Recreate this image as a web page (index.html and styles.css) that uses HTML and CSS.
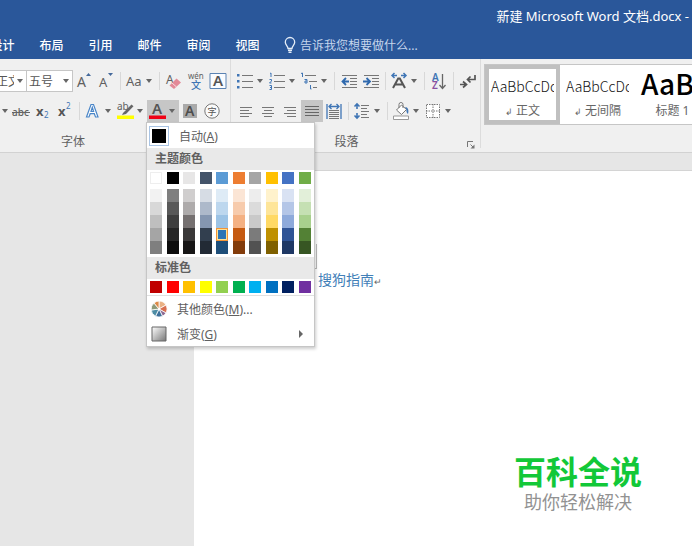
FILE: index.html
```html
<!DOCTYPE html>
<html lang="zh-CN">
<head>
<meta charset="utf-8">
<title>新建 Microsoft Word 文档.docx</title>
<link rel="stylesheet" href="styles.css">
</head>
<body>
<svg class="defs" aria-hidden="true">
  <symbol id="caret" viewBox="0 0 6 4"><path d="M0 0h6L3 4z" fill="#666"/></symbol>
</svg>
<header class="title-area">
  <div class="title">新建 Microsoft Word 文档.docx -</div>
  <nav class="tabs">
    <a href="#">设计</a><a href="#">布局</a><a href="#">引用</a><a href="#">邮件</a><a href="#">审阅</a><a href="#">视图</a>
    <button class="tell-me" type="button">
      <svg width="12" height="16" viewBox="0 0 12 16" fill="none" stroke="#e4edf8" stroke-width="1.3"><path d="M4 11.5C4 9 1.300 8 1.300 5.200a4.700 4.700 0 0 1 9.400 0C10.700 8 8 9 8 11.500z"/><path d="M4 13.300h4M4.500 15.200h3" stroke-width="1.600"/></svg>
      <span>告诉我您想要做什么...</span>
    </button>
  </nav>
</header>

<section class="ribbon">
  <div class="group font-group">
    <div class="row">
      <span class="combo name"><select aria-label="字体"><option>正文</option></select><svg class="caret"><use href="#caret"/></svg></span>
      <span class="combo size"><select aria-label="字号"><option>五号</option></select><svg class="caret"><use href="#caret"/></svg></span>
      <button class="tool" type="button" aria-label="增大字号"><svg width="16" height="20" viewBox="0 0 16 20"><text x="1" y="16" class="g" font-size="14">A</text><path d="M10 5l2.500-3L15 5z" fill="#44699b"/></svg></button>
      <button class="tool" type="button" aria-label="减小字号"><svg width="16" height="20" viewBox="0 0 16 20"><text x="1" y="16" class="g" font-size="13">A</text><path d="M10 2h5l-2.500 3z" fill="#44699b"/></svg></button>
      <i class="sep"></i>
      <button class="split" type="button" aria-label="更改大小写"><svg width="18" height="20" viewBox="0 0 18 20"><text x="0" y="15" class="g" font-size="13">Aa</text></svg><svg class="caret"><use href="#caret"/></svg></button>
      <i class="sep"></i>
      <button class="tool" type="button" aria-label="清除格式"><svg width="16" height="20" viewBox="0 0 16 20"><text x="0" y="13" class="g" font-size="12">A</text><path d="M3.500 14.500l7-7 4.500 4-7 6.500z" fill="#e38a98"/><path d="M6 12l4.500 4" stroke="#f8dce0"/></svg></button>
      <button class="tool" type="button" aria-label="拼音指南"><svg width="16" height="20" viewBox="0 0 16 20"><text x="0" y="8" class="g" font-size="8">wén</text><text x="3" y="18" font-size="10" font-weight="500" fill="#3f75b5">文</text></svg></button>
      <button class="tool" type="button" aria-label="字符边框"><svg width="18" height="20" viewBox="0 0 18 20"><path d="M1 2.500h16v15H1z" fill="#fafcff" stroke="#5b83b3"/><text x="4" y="15" font-size="15" font-weight="600" fill="#555">A</text></svg></button>
    </div>
    <div class="row">
      <button class="tail" type="button" aria-label="下划线"><svg class="caret"><use href="#caret"/></svg></button>
      <button class="tool" type="button" aria-label="删除线"><svg width="18" height="20" viewBox="0 0 18 20"><text x="0" y="15" class="g" font-size="10" font-weight="500">abc</text><path d="M0 11.500h18" stroke="#666"/></svg></button>
      <button class="tool" type="button" aria-label="下标"><svg width="16" height="20" viewBox="0 0 16 20"><text x="1" y="15" font-size="13" font-weight="700" fill="#555">x</text><text x="9" y="17" font-size="8" fill="#3f75b5">2</text></svg></button>
      <button class="tool" type="button" aria-label="上标"><svg width="16" height="20" viewBox="0 0 16 20"><text x="1" y="15" font-size="13" font-weight="700" fill="#555">x</text><text x="9" y="8" font-size="8" fill="#3f75b5">2</text></svg></button>
      <i class="sep"></i>
      <button class="split" type="button" aria-label="文本效果"><svg width="16" height="20" viewBox="0 0 16 20"><path d="M1.500 16L6 3.500h2.500L13 16h-2.500l-1.200-3.300H5.200L4 16zM6 10.500h2.600L7.300 6.300z" fill="#fff" stroke="#4a86c8" stroke-width="1.200"/></svg><svg class="caret"><use href="#caret"/></svg></button>
      <button class="split" type="button" aria-label="突出显示"><svg width="18" height="20" viewBox="0 0 18 20"><text x="0" y="9" class="g" font-size="10">ab</text><path d="M6 12l8.500-8.500 2 1.700L9 13l-4 1z" fill="#666"/><path d="M0 14.500h17v3.500H0z" fill="#ff0"/></svg><svg class="caret"><use href="#caret"/></svg></button>
      <div class="color-picker">
        <button class="split active" type="button" aria-label="字体颜色" aria-expanded="true"><svg width="17" height="20" viewBox="0 0 17 20"><text x="3" y="13" font-size="15" font-weight="600" fill="#555">A</text><path d="M0 14.500h17v3.500H0z" fill="#f00014"/></svg><svg class="caret"><use href="#caret"/></svg></button>
        <div class="menu">
          <button class="menu-item auto" type="button"><span class="auto-swatch"></span><span>自动(<u>A</u>)</span></button>
          <h3>主题颜色</h3>
          <div class="swatches base" id="theme"></div>
          <div class="swatches shades" id="shades"></div>
          <h3>标准色</h3>
          <div class="swatches base" id="standard"></div>
          <div class="menu-foot">
            <button class="menu-item" type="button"><svg width="16" height="16" viewBox="0 0 16 16"><g stroke="#fff" stroke-width=".8"><path d="M8 8V0a8 8 0 0 1 7 4z" fill="#e9b184"/><path d="M8 8l7-4a8 8 0 0 1 0 8z" fill="#d86f50"/><path d="M8 8l7 4a8 8 0 0 1-3.500 3.200z" fill="#8c6b94"/><path d="M8 8l3.500 7.200a8 8 0 0 1-7 0z" fill="#3f719b"/><path d="M8 8l-3.500 7.200A8 8 0 0 1 .2 9z" fill="#4d8ca4"/><path d="M8 8L.2 9A8 8 0 0 1 3 2z" fill="#8d9a7a"/><path d="M8 8L3 2a8 8 0 0 1 5-2z" fill="#dd8a48"/></g><circle cx="8" cy="8" r="1" fill="#fff"/></svg><span>其他颜色(<u>M</u>)...</span></button>
            <button class="menu-item" type="button"><svg width="16" height="16" viewBox="0 0 16 16"><defs><linearGradient id="gr" x2="1" y2="1"><stop stop-color="#fff"/><stop offset="1" stop-color="#777"/></linearGradient></defs><path d="M1 1h14v14H1z" fill="url(#gr)" stroke="#666"/></svg><span>渐变(<u>G</u>)</span><svg class="more" width="4" height="8" viewBox="0 0 4 8"><path d="M0 0l4 4-4 4z" fill="#666"/></svg></button>
          </div>
        </div>
      </div>
      <button class="tool" type="button" aria-label="字符底纹"><svg width="16" height="20" viewBox="0 0 16 20"><path d="M1 3h14v14H1z" fill="#aaa"/><text x="3" y="15" font-size="14" font-weight="600" fill="#4d4d4d">A</text></svg></button>
      <button class="tool" type="button" aria-label="带圈字符"><svg width="16" height="20" viewBox="0 0 16 20"><circle cx="8" cy="10" r="7.200" fill="#fafafa" stroke="#777"/><text x="3.500" y="13.500" font-size="9" fill="#555">字</text></svg></button>
    </div>
    <div class="label"><span>字体</span></div>
  </div>

  <div class="group para-group">
    <div class="row">
      <button class="split" type="button" aria-label="项目符号"><svg width="16" height="20" viewBox="0 0 16 20"><path d="M5 4.500h11M5 10.500h11M5 16.500h11" stroke="#777"/><path d="M0 3h2.500v2.500H0zM0 9h2.500v2.500H0zM0 15h2.500v2.500H0z" fill="#3f75b5"/></svg><svg class="caret"><use href="#caret"/></svg></button>
      <button class="split" type="button" aria-label="编号"><svg width="16" height="20" viewBox="0 0 16 20"><path d="M5 4.500h11M5 10.500h11M5 16.500h11" stroke="#777"/><path d="M1 2.500l1-.5v4M.5 8.500h2v1.500l-2 2h2M.5 14.500h2v4h-2M1 16.500h1.500" fill="none" stroke="#3f75b5"/></svg><svg class="caret"><use href="#caret"/></svg></button>
      <button class="split" type="button" aria-label="多级列表"><svg width="16" height="20" viewBox="0 0 16 20"><path d="M4 4.500h11M8 10.500h8M12 16.500h4" stroke="#777"/><path d="M0 2.500l1.500-.5v4M3.500 8.500h2.500v3.500H4v-2h2M9.500 14v4h1" fill="none" stroke="#3f75b5"/></svg><svg class="caret"><use href="#caret"/></svg></button>
      <i class="sep"></i>
      <button class="tool" type="button" aria-label="减少缩进量"><svg width="16" height="20" viewBox="0 0 16 20"><path d="M1 4.500h15M9 7.500h7M9 10.500h7M9 13.500h7M1 16.500h15" stroke="#777"/><path d="M8 10.500H2M5 7l-3.500 3.500L5 14" fill="none" stroke="#2f69ae" stroke-width="1.800"/></svg></button>
      <button class="tool" type="button" aria-label="增加缩进量"><svg width="16" height="20" viewBox="0 0 16 20"><path d="M1 4.500h15M9 7.500h7M9 10.500h7M9 13.500h7M1 16.500h15" stroke="#777"/><path d="M0 10.500h6M3.500 7L7 10.500 3.500 14" fill="none" stroke="#2f69ae" stroke-width="1.800"/></svg></button>
      <i class="sep"></i>
      <button class="split" type="button" aria-label="中文版式"><svg width="16" height="20" viewBox="0 0 16 20"><path d="M2 17L7.200 7.500h1.600L14 17M4.500 13.500h7" fill="none" stroke="#555" stroke-width="2"/><path d="M6 4.500H1M3.500 2L1 4.500 3.500 7M10 4.500h5M12.500 2L15 4.500 12.500 7" fill="none" stroke="#3f75b5" stroke-width="1.500"/></svg><svg class="caret"><use href="#caret"/></svg></button>
      <i class="sep"></i>
      <button class="tool" type="button" aria-label="排序"><svg width="16" height="20" viewBox="0 0 16 20"><text x="1" y="10" font-size="10" font-weight="600" fill="#3f75b5">A</text><text x="1" y="18" font-size="10" font-weight="600" fill="#8950a0">Z</text><path d="M11.500 3v14M8.500 14l3 3.500 3-3.500" fill="none" stroke="#666" stroke-width="1.300"/></svg></button>
      <i class="sep"></i>
      <button class="tool" type="button" aria-label="显示编辑标记"><svg width="16" height="20" viewBox="0 0 16 20"><path d="M15 4v4.500H8M10.500 5.500L7.500 8.500l3 3M0 13.500h6M3 10.500L6.500 13.500 3 16.500" fill="none" stroke="#555" stroke-width="1.700"/></svg></button>
    </div>
    <div class="row">
      <button class="tool" type="button" aria-label="左对齐"><svg width="14" height="20" viewBox="0 0 14 20"><path d="M1 6.500h12M1 9.500h9M1 12.500h12M1 15.500h9" stroke="#777"/></svg></button>
      <button class="tool" type="button" aria-label="居中"><svg width="14" height="20" viewBox="0 0 14 20"><path d="M1 6.500h12M3 9.500h8M1 12.500h12M3 15.500h8" stroke="#777"/></svg></button>
      <button class="tool" type="button" aria-label="右对齐"><svg width="14" height="20" viewBox="0 0 14 20"><path d="M1 6.500h12M4 9.500h9M1 12.500h12M4 15.500h9" stroke="#777"/></svg></button>
      <button class="tool active" type="button" aria-label="两端对齐"><svg width="14" height="20" viewBox="0 0 14 20"><path d="M0 5.500h14M0 8.500h14M0 11.500h14M0 14.500h14" stroke="#666"/></svg></button>
      <button class="tool" type="button" aria-label="分散对齐"><svg width="16" height="20" viewBox="0 0 16 20"><path d="M3 9.500h10M3 11.500h10M3 13.500h10M3 15.500h10M3 17.500h10" stroke="#777"/><path d="M1 3v15M15 3v15M3.500 5.500h9M5.500 3L3 5.500 5.500 8M10.500 3L13 5.500 10.500 8" fill="none" stroke="#3f75b5" stroke-width="1.300"/></svg></button>
      <i class="sep"></i>
      <button class="split" type="button" aria-label="行距"><svg width="16" height="20" viewBox="0 0 16 20"><path d="M7 4.500h8M7 7.500h6M7 10.500h8M7 13.500h6M7 16.500h8" stroke="#777"/><path d="M3 3v5M.5 5.500L3 3l2.500 2.500M3 12v5M.5 14.500L3 17l2.500-2.500" fill="none" stroke="#3f75b5" stroke-width="1.600"/></svg><svg class="caret"><use href="#caret"/></svg></button>
      <i class="sep"></i>
      <button class="split" type="button" aria-label="底纹"><svg width="16" height="20" viewBox="0 0 16 20"><path d="M3.500 9L8.500 4l5 4.500-5 5zM6 7V3.500a2 2 0 0 1 4 0V7" fill="#fff" stroke="#777"/><path d="M12 6c3 0 4 3 3 7-1-1-2-2-1.500-4.500z" fill="#3f75b5"/><path d="M.5 15h15v3.500H.5z" fill="#fff" stroke="#999"/></svg><svg class="caret"><use href="#caret"/></svg></button>
      <button class="split" type="button" aria-label="边框"><svg width="16" height="20" viewBox="0 0 16 20"><path d="M1 3h14v14H1z" fill="#fff"/><path d="M1.500 3.500h13v13h-13zM8 3v14M1 10h14" fill="none" stroke="#777" stroke-dasharray="1.500 1"/></svg><svg class="caret"><use href="#caret"/></svg></button>
    </div>
    <div class="label"><span>段落</span><button class="launcher" type="button" aria-label="段落设置"><svg width="8" height="8" viewBox="0 0 8 8"><path d="M.5 6V.5H6M3.500 3.500l3 3" fill="none" stroke="#777"/><path d="M7.500 3.500v4h-4z" fill="#777"/></svg></button></div>
  </div>

  <div class="gallery">
    <button class="style selected" type="button"><span class="sample">AaBbCcDc</span><span class="name"><small>↲</small> 正文</span></button>
    <button class="style" type="button"><span class="sample">AaBbCcDc</span><span class="name"><small>↲</small> 无间隔</span></button>
    <button class="style" type="button"><span class="sample heading">AaBb</span><span class="name">标题 1</span></button>
  </div>
</section>

<main class="workspace">
  <article class="page">
    <div class="corner"></div>
    <p>搜狗指南<small>↵</small></p>
  </article>
  <aside class="brand"><strong>百科全说</strong><span>助你轻松解决</span></aside>
</main>
<script src="swatches.js"></script>
</body>
</html>
```
FILE: styles.css
```css
* { box-sizing: border-box; }
html, body { height: 100%; }
body {
  margin: 0;
  display: flex;
  flex-direction: column;
  overflow: hidden;
  background: #e6e6e6;
  color: #606060;
  font-family: "Noto Sans", "Noto Sans CJK SC", sans-serif;
  font-size: 12px;
}
button {
  margin: 0;
  padding: 0;
  border: 0;
  background: none;
  color: inherit;
  font: inherit;
}
svg { display: block; flex: none; overflow: visible; }
.defs { position: absolute; width: 0; height: 0; }
.g { fill: #606060; }
.caret { width: 6px; height: 4px; }

.title-area { background: #2a579a; color: #fff; flex: none; }
.title {
  height: 32px;
  padding-right: 3px;
  line-height: 32px;
  font-size: 13px;
  text-align: right;
  white-space: nowrap;
}
.tabs { display: flex; height: 27px; margin-left: -22px; padding-bottom: 2px; align-items: center; }
.tabs a {
  width: 49px;
  flex: none;
  color: #fff;
  text-align: center;
  text-decoration: none;
  font-weight: 500;
}
.tell-me {
  display: flex;
  align-items: center;
  gap: 4px;
  margin-left: 12px;
  color: #c5d5ec;
  white-space: nowrap;
}

.ribbon {
  display: flex;
  flex: none;
  height: 94px;
  background: #f0f0f0;
  border-bottom: 1px solid #d2d2d2;
}
.group {
  flex: none;
  display: flex;
  flex-direction: column;
  gap: 8px;
  margin-bottom: 4px;
  padding-top: 11px;
  border-right: 1px solid #dcdcdc;
}
.font-group { width: 231px; }
.para-group { width: 250px; padding-left: 4px; }
.row { display: flex; height: 22px; align-items: center; }
.tool, .split { height: 22px; flex: none; display: flex; align-items: center; }
.tool { width: 22px; justify-content: center; }
.split { width: 32px; justify-content: space-between; padding: 0 4px 0 2px; }
.tail { width: 10px; height: 22px; padding-left: 2px; }
.active { background: #c6c6c6; }
.sep { flex: none; width: 1px; height: 18px; margin: 0 3px; background: #d8d8d8; }
.combo { position: relative; flex: none; height: 22px; }
.combo.name { width: 27px; }
.combo.size { width: 47px; margin-left: -1px; }
.combo select {
  appearance: none;
  width: 100%;
  height: 100%;
  padding: 0 14px 0 2px;
  border: 1px solid #c6c6c6;
  border-radius: 0;
  background: #fff;
  color: #555;
  font: inherit;
}
.combo.name select { border-left: 0; padding: 0 12px 0 0; text-indent: -4px; }
.combo .caret { position: absolute; right: 4px; top: 9px; }
.label {
  display: flex;
  position: relative;
  justify-content: center;
  line-height: 24px;
}
.font-group .label { padding-right: 84px; }
.para-group .label { padding-right: 22px; }
.launcher { position: absolute; right: 5px; bottom: 5px; }

.gallery {
  flex: 1;
  min-width: 0;
  height: 61px;
  display: flex;
  margin: 5px 0 0 3px;
  border: 1px solid #c6c6c6;
  border-right: 0;
  background: #fff;
  overflow: hidden;
}
.style {
  width: 75px;
  flex: none;
  display: flex;
  flex-direction: column;
  align-items: center;
  border: 4px solid transparent;
  padding: 0 2px;
}
.style.selected { border-color: #c0c0c0; }
.sample {
  width: 100%;
  height: 34px;
  overflow: hidden;
  line-height: 34px;
  text-align: left;
  font-family: "Noto Sans CJK SC", sans-serif;
  font-size: 14px;
  font-weight: 300;
  color: #111;
  white-space: nowrap;
}
.sample.heading { font-size: 28px; line-height: 28px; font-weight: 500; color: #000; overflow: visible; }
.style .name { line-height: 16px; color: #666; white-space: nowrap; }
.style small { font-size: 9px; }

.color-picker { position: relative; }
.menu {
  position: absolute;
  z-index: 2;
  top: 100%;
  left: -1px;
  width: 169px;
  border: 1px solid #c6c6c6;
  background: #fff;
  box-shadow: 1px 2px 3px #0003;
}
.menu h3 {
  margin: 0;
  padding-left: 8px;
  background: #e9e9e9;
  font-size: 12px;
  line-height: 22px;
  font-weight: 600;
}
.menu-item {
  display: flex;
  align-items: center;
  width: 100%;
  height: 25px;
  gap: 10px;
  padding-left: 4px;
}
.auto { padding-left: 2px; }
.auto-swatch { width: 20px; height: 20px; padding: 2px; border: 1px solid #a9c4e4; background: #000 content-box; }
.more { margin: 0 11px 0 auto; }
.menu-foot { border-top: 1px solid #e0e0e0; }
.swatches {
  display: grid;
  grid-template-columns: repeat(10, 12px);
  justify-content: space-between;
  padding: 2px 3px;
}
.swatches button { height: 13px; }
.swatches.base button { height: 12px; }
.shades { padding: 3px; }
.swatches .outlined { box-shadow: inset 0 0 0 1px #eee; }
.swatches .chosen { border: 1px solid #f29436; box-shadow: inset 0 0 0 1px #ffe294; }

.workspace { flex: 1; position: relative; padding: 17px 0 0 194px; }
.page { height: 100%; background: #fff; border-top: 1px solid #d4d4d4; }
.corner { width: 123px; height: 98px; border-right: 1px solid #bbb; clip-path: inset(73px 0 0 119px); border-bottom: 1px solid #bbb; }
.page p { margin: 0 0 0 124px; color: #4280b8; font-size: 14px; line-height: 22px; }
.page small { font-size: 9px; color: #666; }
.brand {
  position: absolute;
  right: 50px;
  bottom: 32px;
  display: flex;
  flex-direction: column;
  align-items: center;
}
.brand strong { color: #12c838; font-size: 32px; line-height: 36px; font-weight: 700; }
.brand span { color: #929292; font-size: 18px; line-height: 24px; }
```
FILE: swatches.js
```js
const theme = ["#ffffff", "#000000", "#e7e6e6", "#44546a", "#5b9bd5", "#ed7d31", "#a5a5a5", "#ffc000", "#4472c4", "#70ad47"];
const shades = [
  ["#f2f2f2", "#7f7f7f", "#d0cece", "#d6dce4", "#deebf6", "#fbe5d5", "#ededed", "#fff2cc", "#d9e2f3", "#e2efd9"],
  ["#d8d8d8", "#595959", "#aeabab", "#adb9ca", "#bdd7ee", "#f7cbac", "#dbdbdb", "#fee599", "#b4c6e7", "#c5e0b3"],
  ["#bfbfbf", "#3f3f3f", "#757070", "#8496b0", "#9cc3e5", "#f4b183", "#c9c9c9", "#ffd965", "#8eaadb", "#a8d08d"],
  ["#a5a5a5", "#262626", "#3a3838", "#323f4f", "#2e75b5", "#c55a11", "#7b7b7b", "#bf9000", "#2f5496", "#538135"],
  ["#7f7f7f", "#0c0c0c", "#171616", "#222a35", "#1e4e79", "#833c0b", "#525252", "#7f6000", "#1f3864", "#375623"]
];
const standard = ["#c00000", "#ff0000", "#ffc000", "#ffff00", "#92d050", "#00b050", "#00b0f0", "#0070c0", "#002060", "#7030a0"];

function fill(id, colors) {
  const box = document.getElementById(id);
  colors.forEach(color => {
    const button = document.createElement("button");
    button.type = "button";
    button.setAttribute("aria-label", color);
    button.style.backgroundColor = color;
    if (color === "#ffffff") button.className = "outlined";
    if (color === "#2e75b5") button.className = "chosen";
    box.append(button);
  });
}
fill("theme", theme);
fill("shades", shades.flat());
fill("standard", standard);
```
